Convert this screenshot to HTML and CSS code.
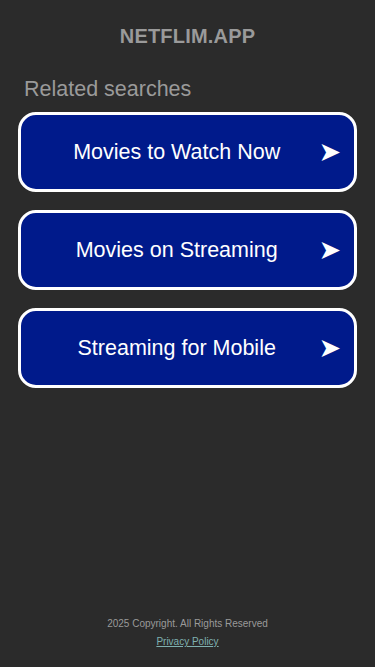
FILE: index.html
```html
<!DOCTYPE html>
<html lang="en">
<head>
<meta charset="utf-8">
<meta name="viewport" content="width=device-width, initial-scale=1">
<title>NETFLIM.APP</title>
<link rel="stylesheet" href="styles.css">
</head>
<body>
<div class="page">
  <header class="header">
    <div class="logo">NETFLIM.APP</div>
  </header>
  <main class="main">
    <h2 class="related">Related searches</h2>
    <div class="list">
      <a class="item" href="#"><span class="label">Movies to Watch Now</span><span class="arrow">➤</span></a>
      <a class="item" href="#"><span class="label">Movies on Streaming</span><span class="arrow">➤</span></a>
      <a class="item" href="#"><span class="label">Streaming for Mobile</span><span class="arrow">➤</span></a>
    </div>
  </main>
  <footer class="footer">
    <div class="copy">2025 Copyright. All Rights Reserved</div>
    <a class="privacy" href="#">Privacy Policy</a>
  </footer>
</div>
</body>
</html>
```

FILE: styles.css
```css
html, body {
  margin: 0;
  padding: 0;
  background: #2b2b2b;
  font-family: "Liberation Sans", Arial, sans-serif;
}
.page {
  min-height: 667px;
  display: flex;
  flex-direction: column;
}
.header {
  padding-top: 24px;
  text-align: center;
}
.logo {
  font-size: 20px;
  font-weight: bold;
  color: #9a9a9a;
  line-height: 24px;
  letter-spacing: 0.2px;
}
.main {
  padding: 0 18px;
}
.related {
  margin: 29px 0 0 6px;
  font-size: 21.5px;
  font-weight: normal;
  color: #9a9a9a;
  line-height: 24px;
}
.list {
  margin-top: 11px;
  display: flex;
  flex-direction: column;
  gap: 18px;
}
.item {
  box-sizing: border-box;
  height: 80px;
  border: 3px solid #ffffff;
  border-radius: 18px;
  background: #001a8b;
  display: flex;
  align-items: center;
  padding: 0 13px 0 20px;
  text-decoration: none;
  color: #ffffff;
}
.label {
  flex: 1;
  text-align: center;
  font-size: 21.5px;
  line-height: 24px;
}
.arrow {
  margin-left: 6px;
  font-size: 27px;
  line-height: 24px;
  font-family: "DejaVu Sans", sans-serif;
  color: #ffffff;
}
.footer {
  margin-top: auto;
  padding-bottom: 18px;
  text-align: center;
}
.copy {
  font-size: 10px;
  color: #9a9a9a;
  line-height: 12px;
}
.privacy {
  display: inline-block;
  margin-top: 6px;
  font-size: 10px;
  line-height: 12px;
  color: #7fb0b0;
  text-decoration: underline;
}
```
